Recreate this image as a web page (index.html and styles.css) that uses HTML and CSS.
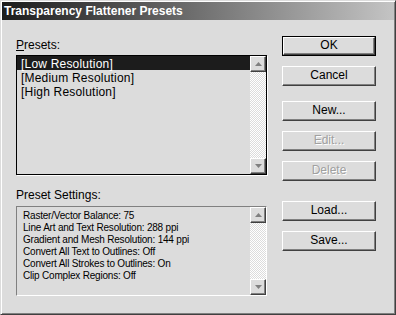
FILE: index.html
```html
<!DOCTYPE html>
<html>
<head>
<meta charset="utf-8">
<link rel="stylesheet" href="styles.css">
</head>
<body>
<div class="window">
  <div class="titlebar"><span class="title">Transparency Flattener Presets</span></div>
  <div class="content">
    <div class="left">
      <div class="label"><u>P</u>resets:</div>
      <div class="listbox">
        <div class="items">
          <div class="item selected">[Low Resolution]</div>
          <div class="item">[Medium Resolution]</div>
          <div class="item">[High Resolution]</div>
        </div>
        <div class="scrollbar">
          <div class="sbtn"><svg width="7" height="4" viewBox="0 0 7 4"><path d="M3.5 0L7 4H0z" fill="#808080"/></svg></div>
          <div class="track"></div>
          <div class="sbtn"><svg width="7" height="4" viewBox="0 0 7 4"><path d="M0 0H7L3.5 4z" fill="#808080"/></svg></div>
        </div>
      </div>
      <div class="label label2">Preset Settings:</div>
      <div class="settings">
        <div class="lines">
          <div>Raster/Vector Balance: 75</div>
          <div>Line Art and Text Resolution: 288 ppi</div>
          <div>Gradient and Mesh Resolution: 144 ppi</div>
          <div>Convert All Text to Outlines: Off</div>
          <div>Convert All Strokes to Outlines: On</div>
          <div>Clip Complex Regions: Off</div>
        </div>
        <div class="scrollbar">
          <div class="sbtn"><svg width="7" height="4" viewBox="0 0 7 4"><path d="M3.5 0L7 4H0z" fill="#808080"/></svg></div>
          <div class="track"></div>
          <div class="sbtn"><svg width="7" height="4" viewBox="0 0 7 4"><path d="M0 0H7L3.5 4z" fill="#808080"/></svg></div>
        </div>
      </div>
    </div>
    <div class="right">
      <div class="btn default"><div class="face">OK</div></div>
      <div class="btn"><div class="face">Cancel</div></div>
      <div class="btn gap1"><div class="face">New...</div></div>
      <div class="btn disabled"><div class="face">Edit...</div></div>
      <div class="btn disabled"><div class="face">Delete</div></div>
      <div class="btn gap2"><div class="face">Load...</div></div>
      <div class="btn"><div class="face">Save...</div></div>
    </div>
  </div>
</div>
</body>
</html>
```

FILE: styles.css
```css
html, body {
  margin: 0;
  padding: 0;
  background: #dcdcdc;
}
.window {
  width: 396px;
  height: 315px;
  box-sizing: border-box;
  background: #dcdcdc;
  border: 1px solid;
  border-color: #dcdcdc #404040 #404040 #dcdcdc;
  box-shadow: inset 1px 1px 0 #fff, inset -1px -1px 0 #808080;
  padding: 1px;
  font-family: "Liberation Sans", Arial, sans-serif;
  font-size: 12px;
  color: #000;
}
.titlebar {
  height: 18px;
  background: linear-gradient(to right, #1c1c1c, #c4c4c4);
  padding-left: 2px;
  line-height: 18px;
}
.title {
  color: #fff;
  font-weight: bold;
  font-size: 12px;
}
.content {
  display: flex;
  padding: 16px 0 0 14px;
}
.left {
  width: 251px;
  display: flex;
  flex-direction: column;
}
.label {
  height: 19px;
  box-sizing: border-box;
  padding-top: 2px;
  line-height: 15px;
}
.label2 {
  height: 31px;
  padding-top: 13px;
}
.listbox {
  height: 120px;
  box-sizing: border-box;
  border: 1px solid #000;
  box-shadow: 1px 1px 0 #fff;
  display: flex;
}
.items {
  flex: 1;
}
.item {
  height: 14px;
  box-sizing: border-box;
  padding: 3px 0 0 4px;
  line-height: 11px;
  white-space: nowrap;
  letter-spacing: 0.2px;
}
.item.selected {
  background: #1c1c1c;
  color: #fff;
}
.scrollbar {
  width: 16px;
  display: flex;
  flex-direction: column;
}
.sbtn {
  height: 16px;
  box-sizing: border-box;
  background: #dcdcdc;
  border: 1px solid;
  border-color: #fff #404040 #404040 #fff;
  box-shadow: inset -1px -1px 0 #808080;
  display: flex;
  align-items: center;
  justify-content: center;
}
.track {
  flex: 1;
  background-color: #fff;
  background-image: repeating-conic-gradient(#dcdcdc 0 25%, #fff 0 50%);
  background-size: 2px 2px;
}
.settings {
  height: 90px;
  box-sizing: border-box;
  border: 1px solid;
  border-color: #808080 #fff #fff #808080;
  display: flex;
}
.lines {
  flex: 1;
  padding: 3px 0 0 6px;
  font-size: 10px;
  line-height: 12px;
  letter-spacing: -0.2px;
  white-space: nowrap;
}
.right {
  margin-left: 15px;
  width: 94px;
  display: flex;
  flex-direction: column;
  gap: 10px;
}
.btn {
  height: 20px;
  box-sizing: border-box;
}
.btn.default {
  border: 1px solid #000;
}
.face {
  height: 100%;
  box-sizing: border-box;
  border: 1px solid;
  border-color: #fff #404040 #404040 #fff;
  box-shadow: inset -1px -1px 0 #808080;
  text-align: center;
  line-height: 17px;
}
.btn.default .face {
  line-height: 15px;
}
.gap1 {
  margin-top: 5px;
}
.gap2 {
  margin-top: 10px;
}
.disabled .face {
  color: #a0a0a0;
  text-shadow: 1px 1px 0 #fff;
}
```
